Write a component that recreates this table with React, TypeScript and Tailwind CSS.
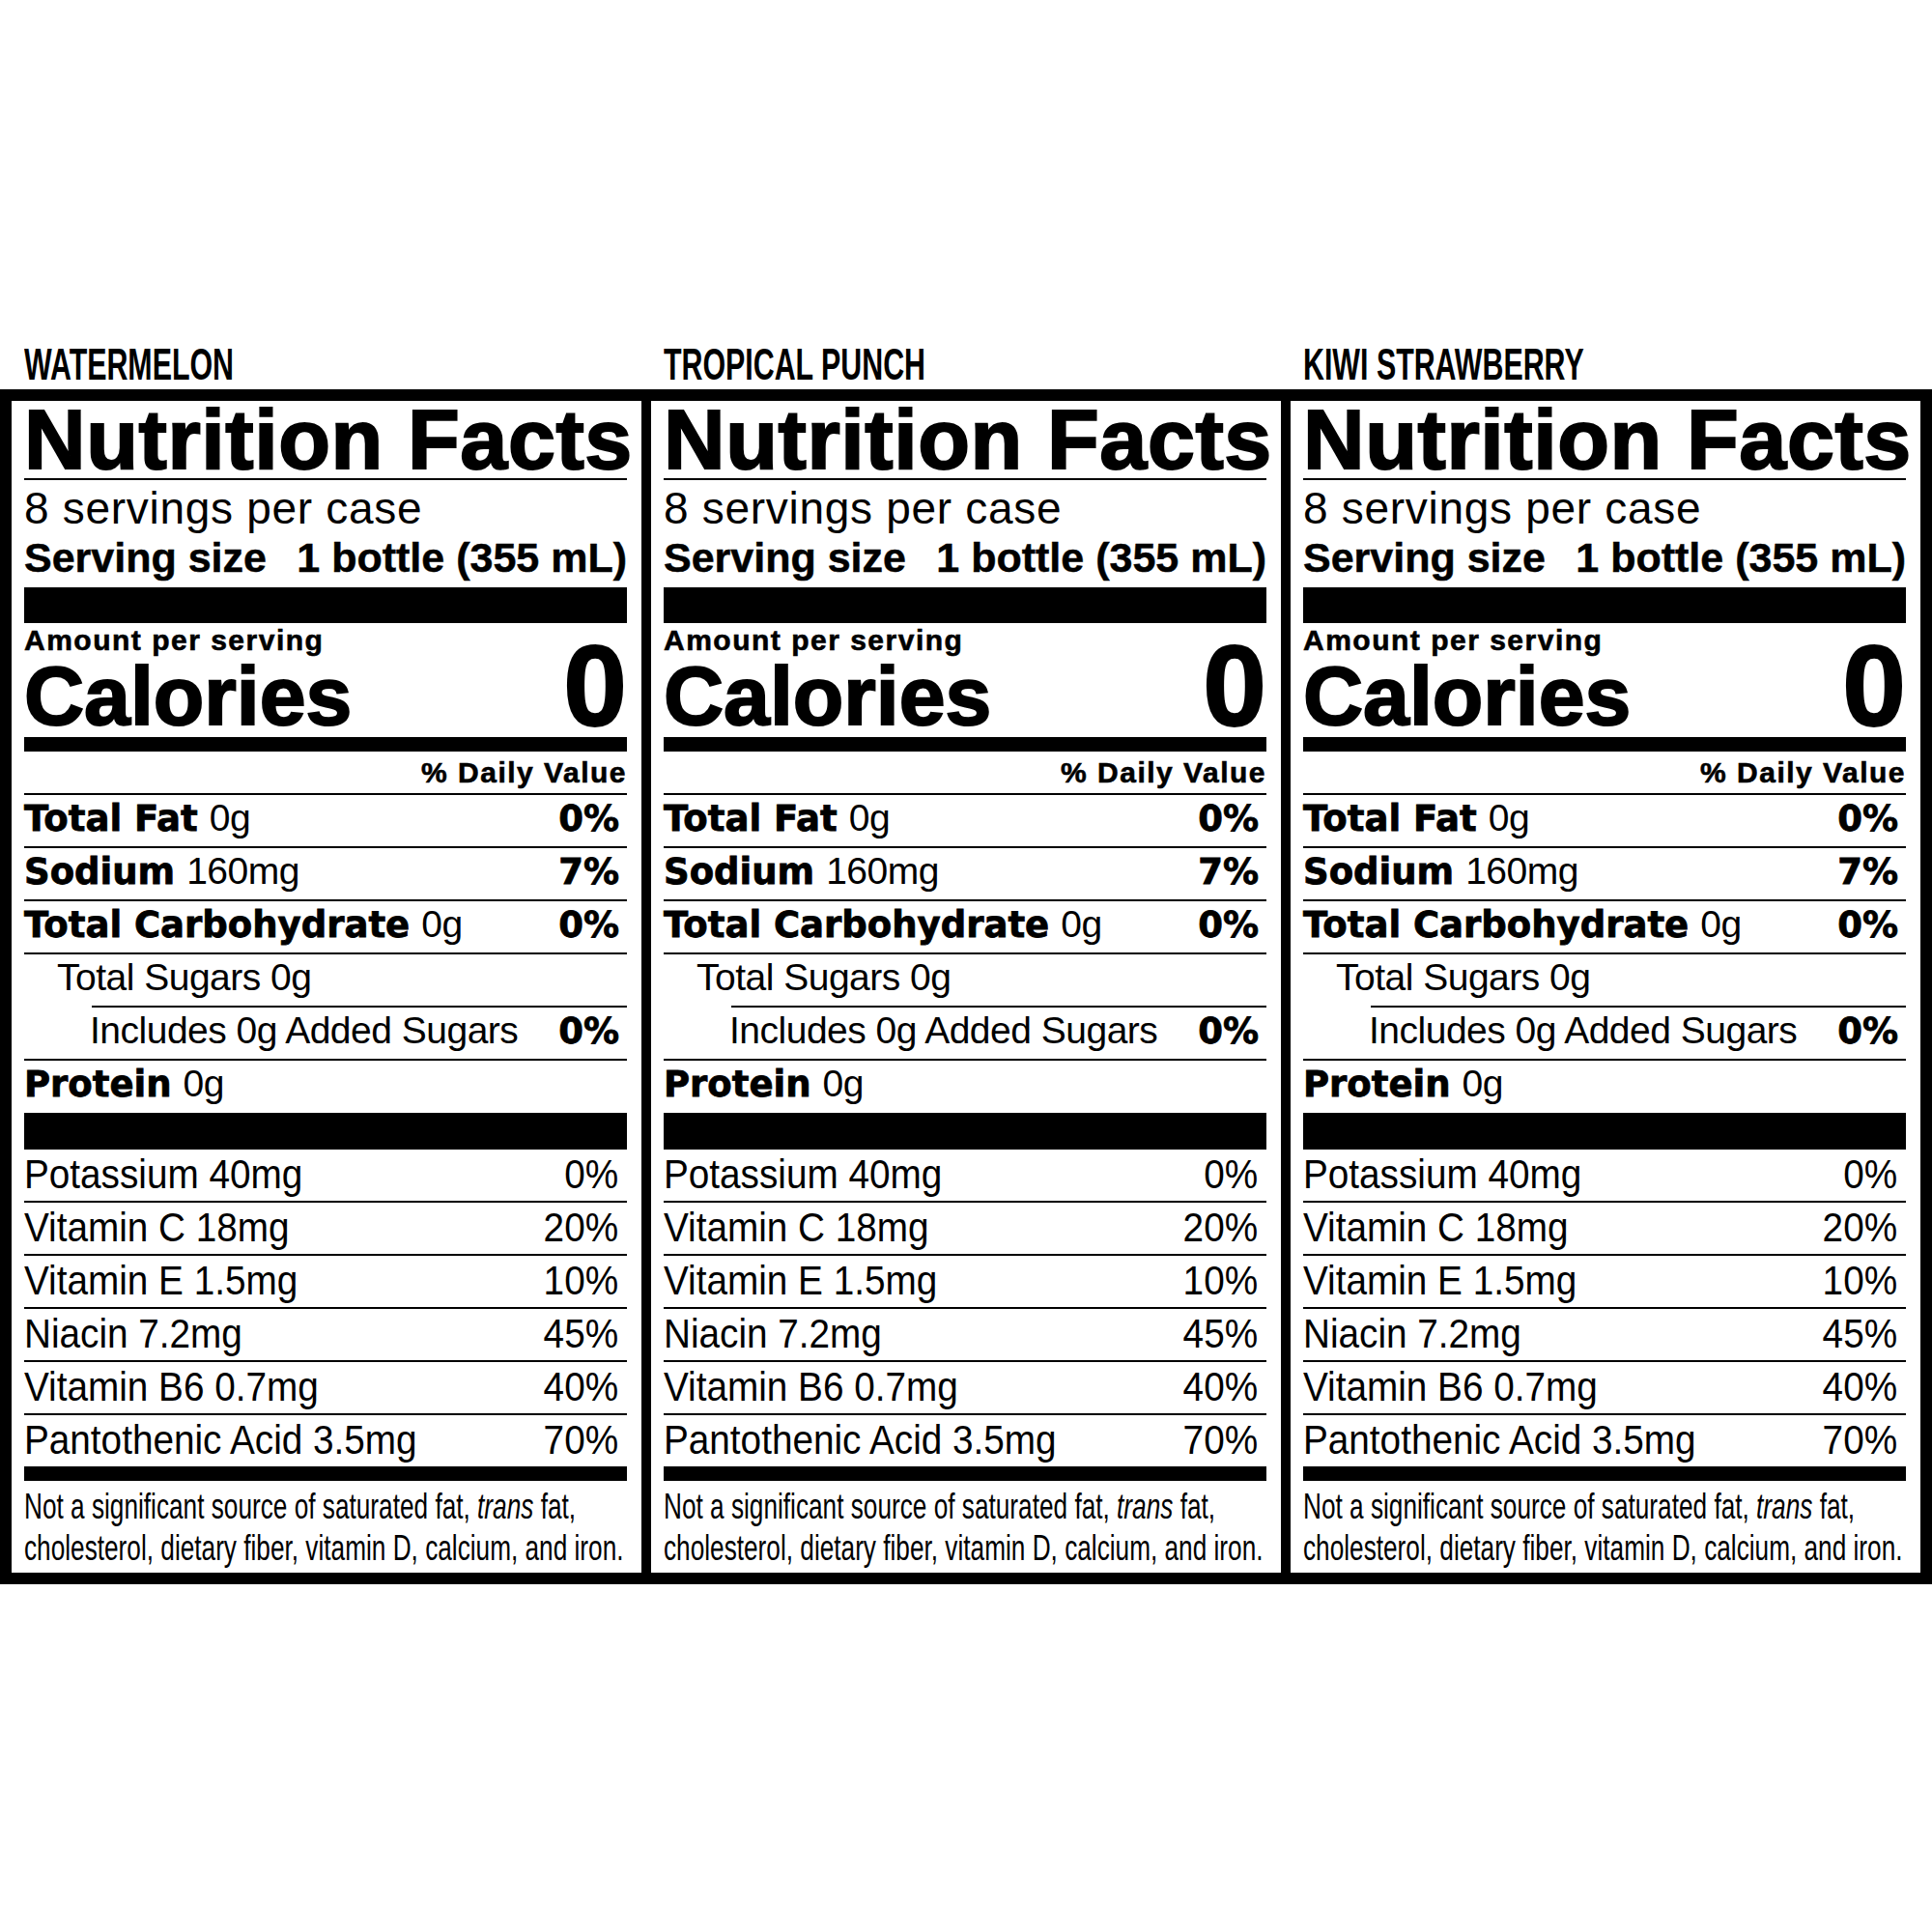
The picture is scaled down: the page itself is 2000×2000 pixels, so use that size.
import React from "react";

const LS = "font-['Liberation_Sans',Arial,sans-serif]";
const DV = "font-['DejaVu_Sans',Verdana,sans-serif]";

const flavors = ["WATERMELON", "TROPICAL PUNCH", "KIWI STRAWBERRY"];

const vitamins = [
  { label: "Potassium 40mg", dv: "0%" },
  { label: "Vitamin C 18mg", dv: "20%" },
  { label: "Vitamin E 1.5mg", dv: "10%" },
  { label: "Niacin 7.2mg", dv: "45%" },
  { label: "Vitamin B6 0.7mg", dv: "40%" },
  { label: "Pantothenic Acid 3.5mg", dv: "70%" },
];

function Bold({ children }: { children: React.ReactNode }) {
  return (
    <span className={`${DV} font-bold text-[37px] tracking-normal [-webkit-text-stroke:0.8px_black]`}>{children}</span>
  );
}

function Reg({ children, gap = false }: { children: React.ReactNode; gap?: boolean }) {
  return (
    <span className={`${LS} font-normal text-[39px] tracking-[-0.5px] ${gap ? "ml-[12px]" : ""}`}>{children}</span>
  );
}

function Pct({ children }: { children: React.ReactNode }) {
  return (
    <div className={`${DV} font-bold text-[37px] leading-none pr-[8px] [-webkit-text-stroke:0.8px_black]`}>
      {children}
    </div>
  );
}

// one nutrient line: 53px of text then a 2px rule (optionally indented)
function NutrientRow({
  children,
  dv,
  indent = 0,
  lineIndent = 0,
  rule = true,
}: {
  children: React.ReactNode;
  dv?: string;
  indent?: number;
  lineIndent?: number;
  rule?: boolean;
}) {
  return (
    <div>
      <div
        className="flex justify-between items-baseline h-[53px] pt-[4px] leading-none"
        style={{ paddingLeft: indent }}
      >
        <div className="leading-none whitespace-nowrap">{children}</div>
        {dv && <Pct>{dv}</Pct>}
      </div>
      {rule && <div className="h-[2px] bg-black" style={{ marginLeft: lineIndent }} />}
    </div>
  );
}

function VitaminRow({ label, dv, rule }: { label: string; dv: string; rule: boolean }) {
  return (
    <div>
      <div className={`${LS} flex justify-between items-baseline h-[53px] pt-[4px] text-[43px] leading-none`}>
        <span className="inline-block origin-left [transform:scaleX(0.9)] whitespace-nowrap">{label}</span>
        <span className="inline-block origin-right [transform:scaleX(0.9)] pr-[10px]">{dv}</span>
      </div>
      {rule && <div className="h-[2px] bg-black" />}
    </div>
  );
}

function Panel() {
  return (
    <div className="w-[652px] bg-white pl-[13px] pr-[15px] pb-[4px] text-black">
      {/* header */}
      <div
        className={`${LS} font-bold text-[88px] leading-[80px] tracking-[0.6px] whitespace-nowrap border-b-2 border-black [-webkit-text-stroke:2px_black]`}
      >
        Nutrition Facts
      </div>
      <div className={`${LS} text-[46px] leading-[58px] tracking-[0.7px]`}>8 servings per case</div>
      <div
        className={`${LS} font-bold text-[43px] leading-[44px] flex justify-between whitespace-nowrap [-webkit-text-stroke:0.5px_black]`}
      >
        <span>Serving size</span>
        <span>1 bottle (355 mL)</span>
      </div>
      <div className="h-[37px] bg-black mt-[9px]" />

      {/* calories */}
      <div className={`${LS} flex justify-between items-end h-[118px] pb-[4px]`}>
        <div>
          <div className="font-bold text-[30px] leading-[36px] tracking-[1.5px] [-webkit-text-stroke:0.6px_black]">
            Amount per serving
          </div>
          <div className="font-bold text-[86px] leading-[78px] [-webkit-text-stroke:2px_black]">Calories</div>
        </div>
        <div className="font-bold text-[118px] leading-[97px] [-webkit-text-stroke:2px_black]">0</div>
      </div>
      <div className="h-[15px] bg-black" />

      <div
        className={`${LS} font-bold text-[30px] leading-[43px] text-right tracking-[1.5px] [-webkit-text-stroke:0.6px_black] border-b-2 border-black`}
      >
        % Daily Value
      </div>

      <NutrientRow dv="0%">
        <Bold>Total Fat</Bold>
        <Reg gap>0g</Reg>
      </NutrientRow>
      <NutrientRow dv="7%">
        <Bold>Sodium</Bold>
        <Reg gap>160mg</Reg>
      </NutrientRow>
      <NutrientRow dv="0%">
        <Bold>Total Carbohydrate</Bold>
        <Reg gap>0g</Reg>
      </NutrientRow>
      <NutrientRow indent={34} lineIndent={70}>
        <Reg>Total Sugars 0g</Reg>
      </NutrientRow>
      <NutrientRow indent={68} dv="0%">
        <Reg>Includes 0g Added Sugars</Reg>
      </NutrientRow>
      <div className="h-[54px] pt-[4px] leading-none whitespace-nowrap">
        <Bold>Protein</Bold>
        <Reg gap>0g</Reg>
      </div>
      <div className="h-[38px] bg-black" />

      {vitamins.map((v, i) => (
        <VitaminRow key={v.label} label={v.label} dv={v.dv} rule={i < vitamins.length - 1} />
      ))}
      <div className="h-[15px] bg-black" />

      {/* footnote */}
      <div
        className={`${LS} w-[870px] pt-[5px] text-[36px] leading-[43px] whitespace-nowrap origin-left [transform:scaleX(0.728)]`}
      >
        Not a significant source of saturated fat, <i>trans</i> fat,
        <br />
        cholesterol, dietary fiber, vitamin D, calcium, and iron.
      </div>
    </div>
  );
}

export default function App() {
  return (
    <div className="w-[2000px] h-[2000px] bg-white text-black overflow-hidden">
      <div className="flex items-end gap-[10px] px-[12px] h-[403px]">
        {flavors.map((f) => (
          <div key={f} className={`${LS} w-[652px] pl-[13px] font-bold text-[46px] leading-[52px]`}>
            <span className="inline-block origin-left [transform:scaleX(0.66)] whitespace-nowrap">{f}</span>
          </div>
        ))}
      </div>
      <div className="flex gap-[10px] bg-black p-[12px]">
        {flavors.map((f) => (
          <Panel key={f} />
        ))}
      </div>
    </div>
  );
}
